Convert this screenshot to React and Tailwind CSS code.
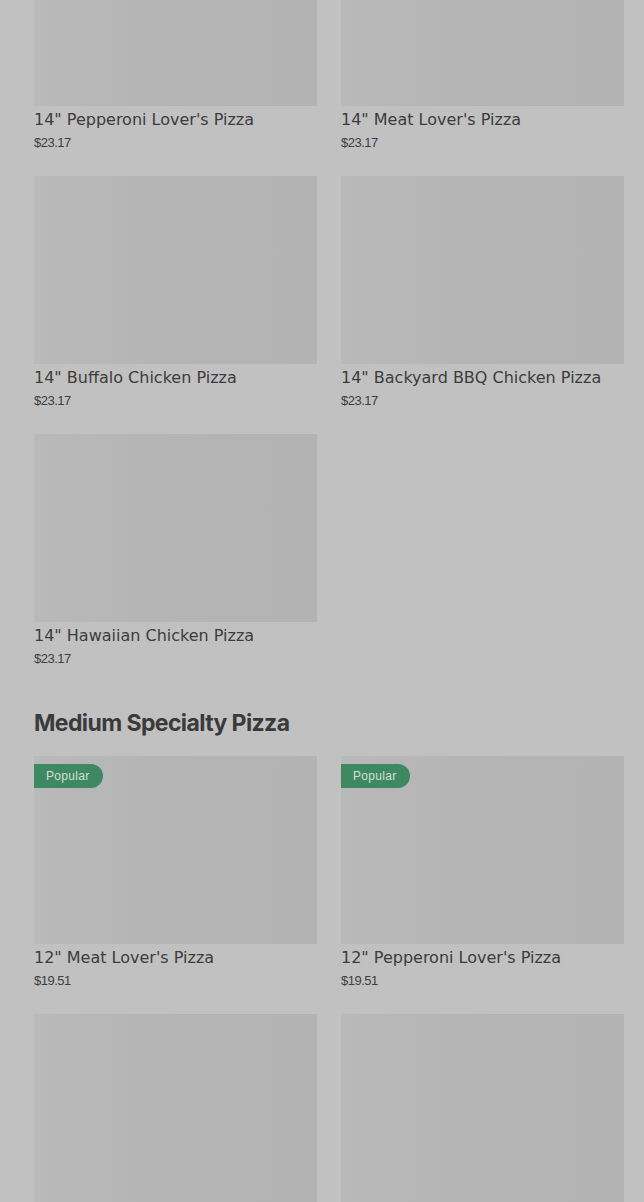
import React from "react";

const LARGE = [
  { name: '14" Pepperoni Lover\'s Pizza', price: "$23.17" },
  { name: '14" Meat Lover\'s Pizza', price: "$23.17" },
  { name: '14" Buffalo Chicken Pizza', price: "$23.17" },
  { name: '14" Backyard BBQ Chicken Pizza', price: "$23.17" },
  { name: '14" Hawaiian Chicken Pizza', price: "$23.17" },
];

const MEDIUM = [
  { name: '12" Meat Lover\'s Pizza', price: "$19.51", popular: true },
  { name: '12" Pepperoni Lover\'s Pizza', price: "$19.51", popular: true },
  { name: '12" Buffalo Chicken Pizza', price: "$19.51" },
  { name: '12" Backyard BBQ Chicken Pizza', price: "$19.51" },
];

function ItemCard({ item }) {
  return (
    <div className="flex flex-col">
      <div className="relative h-[188px] bg-gradient-to-r from-[#b9b9b9] via-[#b4b4b4] to-[#b3b3b3]">
        {item.popular && (
          <span className="absolute left-0 top-2 h-6 pl-3 pr-[14px] flex items-center rounded-r-full bg-[#3f8962] text-[12px] text-[#cfe0d5] font-['Liberation_Sans',sans-serif] tracking-wide">
            Popular
          </span>
        )}
      </div>
      <div className="mt-[2px] text-[16px] leading-6 text-[#3c3c3c] font-['DejaVu_Sans',sans-serif] whitespace-nowrap">
        {item.name}
      </div>
      <div className="mt-px text-[13px] leading-5 text-[#3e3e3e] font-['Liberation_Sans',sans-serif] tracking-[-0.5px]">
        {item.price}
      </div>
    </div>
  );
}

export default function App() {
  return (
    <div className="w-[644px] h-[1202px] overflow-hidden bg-[#c1c1c1]">
      <div className="-mt-[82px] pl-[34px] pr-[20px]">
        <div className="grid grid-cols-2 gap-x-6 gap-y-[23px]">
          {LARGE.map((item) => (
            <ItemCard key={item.name} item={item} />
          ))}
        </div>
        <h2 className="mt-[38px] mb-[17px] h-8 leading-8 text-[23px] font-bold tracking-[-0.6px] text-[#3a3a3a] font-['Inter',sans-serif]">
          Medium Specialty Pizza
        </h2>
        <div className="grid grid-cols-2 gap-x-6 gap-y-[23px]">
          {MEDIUM.map((item) => (
            <ItemCard key={item.name} item={item} />
          ))}
        </div>
      </div>
    </div>
  );
}
